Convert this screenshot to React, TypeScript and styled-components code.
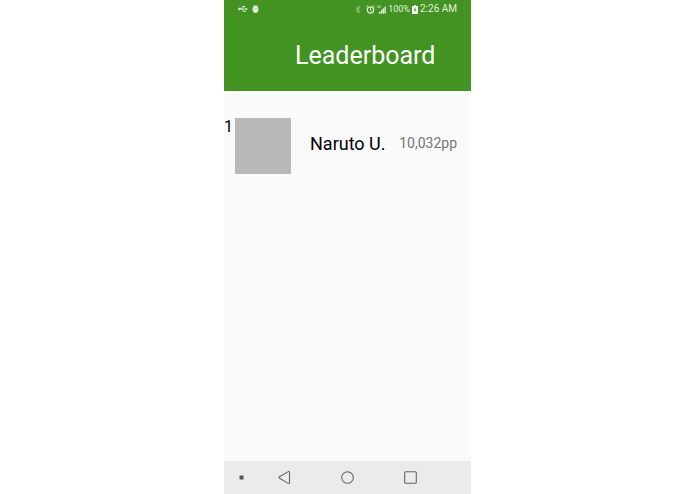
import React from "react";
import styled, { createGlobalStyle } from "styled-components";

const GlobalStyle = createGlobalStyle`
  *, *::before, *::after { box-sizing: border-box; }
  body { margin: 0; background: #fff; font-family: Roboto, "Noto Sans", sans-serif; }
`;

const Stage = styled.div`
  display: flex;
  justify-content: center;
  min-height: 100vh;
`;

const Phone = styled.div`
  display: flex;
  flex-direction: column;
  width: 50vh;
  min-width: 240px;
  background: #fafafa;
`;

const TopBar = styled.header`
  background: #429321;
  color: #fff;
`;

const StatusBar = styled.div`
  display: flex;
  align-items: center;
  justify-content: space-between;
  height: 18px;
  padding: 0 14px;
  font-size: 10px;
  line-height: 18px;
  color: #e3f1dc;
`;

const StatusGroup = styled.div<{ $gap: number }>`
  display: flex;
  align-items: center;
  gap: ${({ $gap }) => $gap}px;

  svg { display: block; flex: none; }
`;

const Battery = styled.span`
  font-size: 9px;
`;

const Title = styled.h1`
  margin: 0;
  padding: 22px 36px 19px 71px;
  font-size: 25px;
  line-height: 32px;
  font-weight: 400;
`;

const Board = styled.ol`
  flex: 1;
  margin: 0;
  padding: 27px 0 0;
  list-style: none;
`;

const Entry = styled.li`
  display: flex;
  align-items: center;
  padding-right: 14px;
`;

const Rank = styled.span`
  align-self: flex-start;
  width: 11px;
  font-size: 16px;
  line-height: 18px;
  color: #000;
`;

const Avatar = styled.div`
  flex: none;
  width: 56px;
  height: 56px;
  margin-right: 19px;
  background: #b9b9b9;
`;

const Name = styled.span`
  flex: 1;
  padding-bottom: 4px;
  font-size: 18px;
  line-height: 24px;
  white-space: nowrap;
  color: #000;
`;

const Points = styled.span`
  padding-bottom: 6px;
  font-size: 14px;
  line-height: 20px;
  color: #757575;
`;

const NavBar = styled.nav`
  display: grid;
  grid-template-columns: 29px repeat(3, 1fr) 29px;
  align-items: center;
  height: 33px;
  background: #ebebeb;
`;

const NavButton = styled.button`
  display: grid;
  place-items: center;
  height: 100%;
  padding: 0;
  border: 0;
  background: none;
  color: #666;
  cursor: pointer;

  svg { display: block; }
`;

const DotButton = styled(NavButton)`
  padding-left: 6px;
`;

const UsbIcon = () => (
  <svg width="10" height="8" viewBox="0 0 10 8" fill="none" stroke="currentColor" strokeWidth="0.9">
    <path d="M1.5 4H9M3 4l1.5-2.4H6M4 4l1.5 2.4H7" />
    <circle cx="1.4" cy="4" r="0.9" fill="currentColor" />
    <circle cx="6.1" cy="1.6" r="0.6" fill="currentColor" />
    <path d="M6.3 5.7h1.4v1.4H6.3zM8 2.8L9.8 4 8 5.2z" fill="currentColor" stroke="none" />
  </svg>
);

const BugIcon = () => (
  <svg width="7" height="8" viewBox="0 0 7 8" fill="currentColor">
    <path d="M1 3a2.5 2.5 0 0 1 5 0zM1 3.6h5v1.9a2.5 2.5 0 0 1-5 0z" />
    <path d="M1.5.4l1 1M5.5.4l-1 1M0 3.3h7M.3 5.2h6.4" stroke="currentColor" strokeWidth="0.8" />
  </svg>
);

const BluetoothIcon = () => (
  <svg width="10" height="9" viewBox="-1 0 10 9" fill="none" stroke="currentColor" strokeWidth="0.9" opacity="0.6">
    <path d="M.8 2.5l4 4L3 8.2V.8l1.8 1.7-4 4" />
  </svg>
);

const AlarmIcon = () => (
  <svg width="9" height="9" viewBox="0 0 9 9" fill="none" stroke="currentColor">
    <circle cx="4.5" cy="5" r="3.2" strokeWidth="1.2" />
    <path d="M4.5 3.2v2l1.3.8M.4 2L2.2.5M8.6 2L6.8.5" />
  </svg>
);

const SignalIcon = () => (
  <svg width="9" height="9" viewBox="0 0 9 9" fill="currentColor">
    <path d="M1 8.5L8.5 1v7.5z" opacity="0.6" />
    <path d="M2 7h1v1.5H2zM4 5.5h1v3H4zM6 3.5h1v5H6zM8 1.5h.8v7H8z" />
    <path d="M.5.5v2h1.2v-2M4.2.8H2.7v2h1.5" fill="none" stroke="currentColor" strokeWidth="0.6" opacity="0.8" />
  </svg>
);

const BatteryIcon = () => (
  <svg width="6" height="9" viewBox="0 0 6 9">
    <path d="M2 0h2v1h2v8H0V1h2z" fill="#fff" />
    <path d="M3.4 2L1.6 5.2h1.2l-.2 2.4 1.9-3.4H3.2z" fill="#429321" />
  </svg>
);

const players = [{ rank: 1, name: "Naruto U.", points: "10,032pp" }];

export default function App() {
  return (
    <>
      <GlobalStyle />
      <Stage>
        <Phone>
          <TopBar>
            <StatusBar>
              <StatusGroup $gap={4}>
                <UsbIcon />
                <BugIcon />
              </StatusGroup>
              <StatusGroup $gap={2}>
                <BluetoothIcon />
                <AlarmIcon />
                <SignalIcon />
                <Battery>100%</Battery>
                <BatteryIcon />
                <time>2:26 AM</time>
              </StatusGroup>
            </StatusBar>
            <Title>Leaderboard</Title>
          </TopBar>
          <Board>
            {players.map((player) => (
              <Entry key={player.rank}>
                <Rank>{player.rank}</Rank>
                <Avatar />
                <Name>{player.name}</Name>
                <Points>{player.points}</Points>
              </Entry>
            ))}
          </Board>
          <NavBar aria-label="System navigation">
            <DotButton aria-label="Toggle navigation bar">
              <svg width="5" height="5" viewBox="0 0 5 5"><path d="M.5.5h4v4h-4z" fill="#555" /></svg>
            </DotButton>
            <NavButton aria-label="Back">
              <svg width="15" height="15" viewBox="0 0 15 15" fill="none" stroke="currentColor" strokeWidth="1.1" strokeLinejoin="round">
                <path d="M2.5 6.8L11.3 1.6Q12.5 1.2 12.5 2.5v10q0 1.3-1.2.9L2.5 8.2Q1.5 7.5 2.5 6.8z" />
              </svg>
            </NavButton>
            <NavButton aria-label="Home">
              <svg width="15" height="15" viewBox="0 0 15 15" fill="none" stroke="currentColor" strokeWidth="1.1">
                <circle cx="7.5" cy="7.5" r="5.8" />
              </svg>
            </NavButton>
            <NavButton aria-label="Recent apps">
              <svg width="15" height="15" viewBox="0 0 15 15" fill="none" stroke="currentColor" strokeWidth="1.1">
                <rect x="1.7" y="1.7" width="11.6" height="11.6" rx="1" />
              </svg>
            </NavButton>
          </NavBar>
        </Phone>
      </Stage>
    </>
  );
}
